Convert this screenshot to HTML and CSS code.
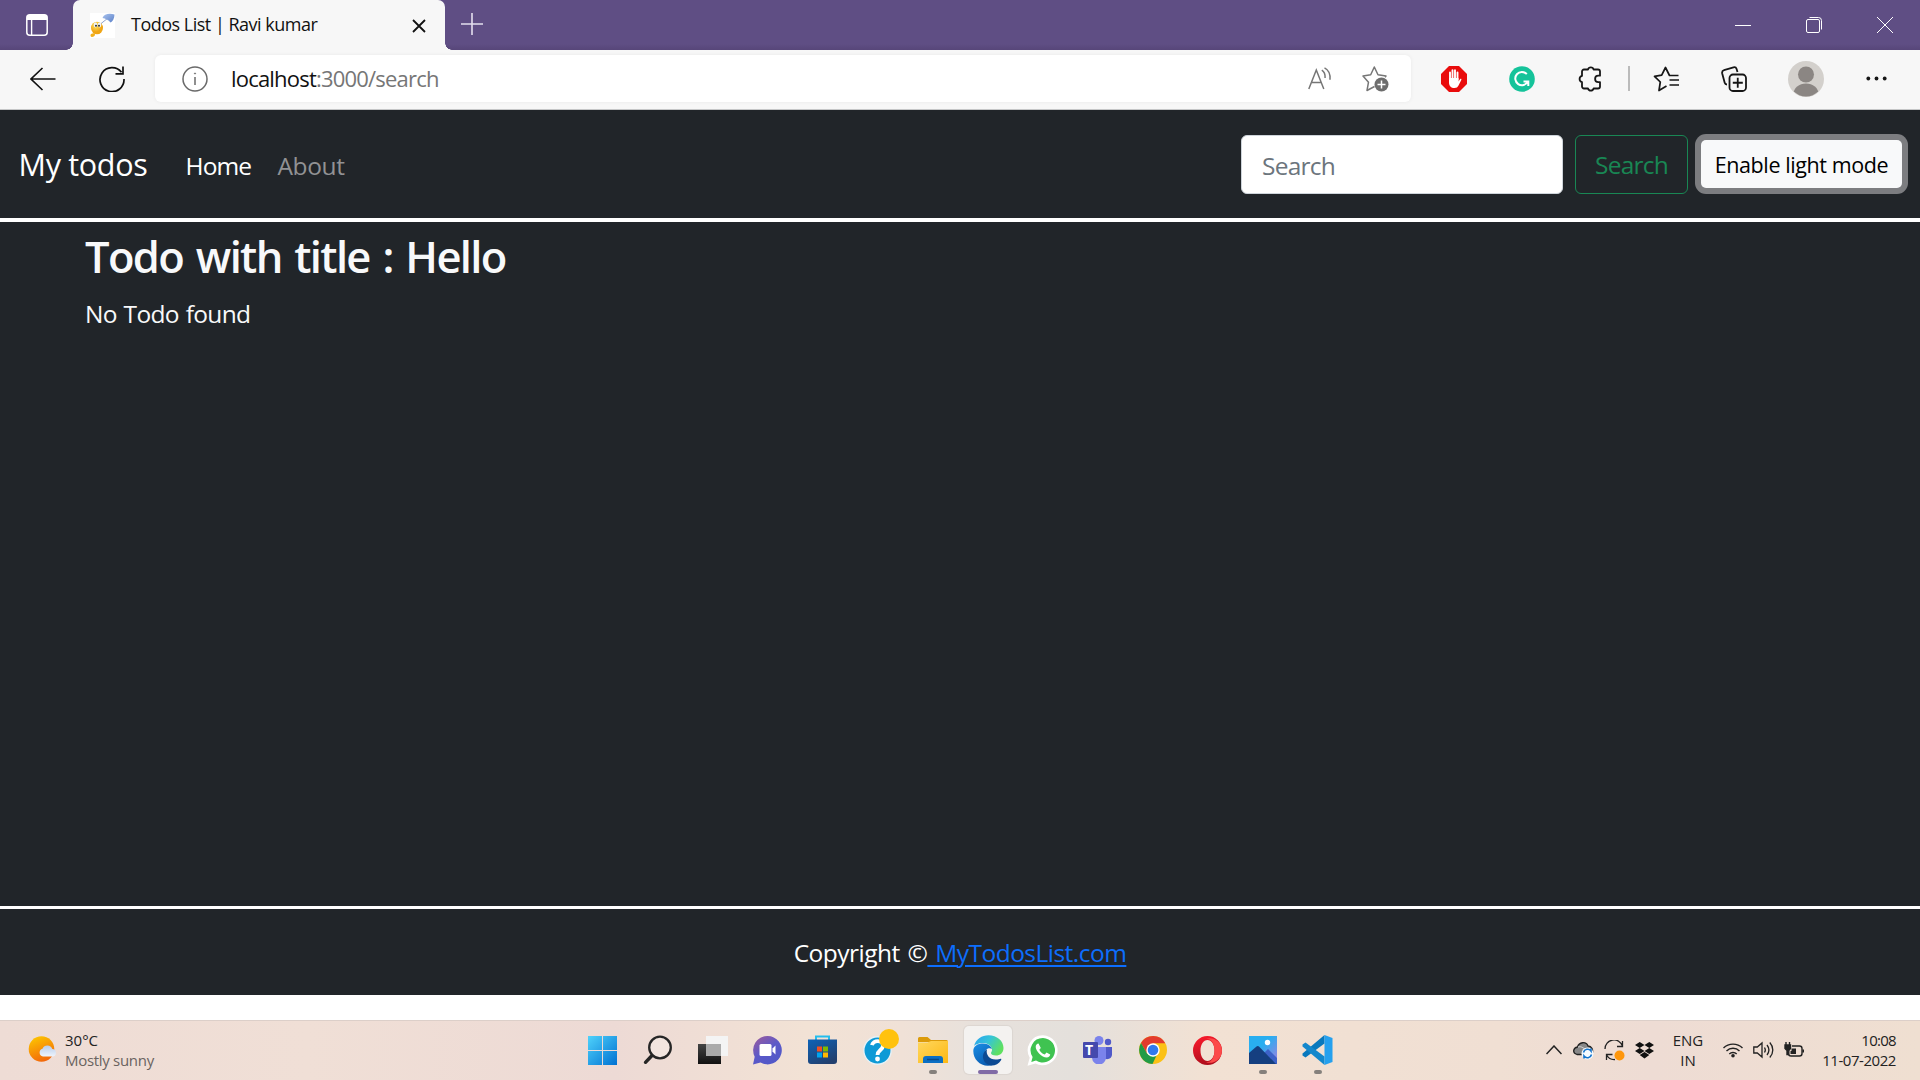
FILE: index.html
```html
<!DOCTYPE html>
<html lang="en">
<head>
<meta charset="utf-8">
<title>Todos List | Ravi kumar</title>
<link rel="stylesheet" href="styles.css">
</head>
<body>
<header class="tabstrip">
  <div class="tab-actions">
    <svg width="22" height="22" viewBox="0 0 22 22" fill="none" stroke="#fff"><rect x=".8" y=".8" width="20.4" height="20.4" rx="3" stroke-width="1.5"/><path d="M1 3.5h20" stroke-width="5"/><path d="M5.6 6v15" stroke-width="1.4"/></svg>
  </div>
  <div class="tab">
    <svg class="favicon" width="25" height="25" viewBox="0 0 25 25"><defs><radialGradient id="fv" cx=".4" cy=".3"><stop offset="0" stop-color="#ffe86a"/><stop offset="1" stop-color="#f0a616"/></radialGradient><linearGradient id="um" x1="0" x2="1" y2="1"><stop stop-color="#a9c3ee"/><stop offset="1" stop-color="#5b80c8"/></linearGradient></defs><path fill="#fff" d="M0 0h25v25H0z"/><path d="M8 13 18 5" stroke="#8ea3cf"/><path d="M12.500 5C14 1 19 0 24.500 1.500c0 4-2 7-4 8-2-2.500-5-4-8-4.500z" fill="url(#um)"/><ellipse cx="7" cy="15" rx="6" ry="6.300" fill="url(#fv)"/><path d="M1 21c2-1 4-1 4 .5S3.500 24 2 24 0 22 1 21z" fill="#f2b01c"/><ellipse cx="5.500" cy="12" rx="1.800" ry="2.400" fill="#eef3f8"/><ellipse cx="9.500" cy="12" rx="1.800" ry="2.400" fill="#eef3f8"/><circle cx="6" cy="12.800" r="1" fill="#333"/><circle cx="9" cy="12.800" r="1" fill="#333"/></svg>
    <span class="tab-title">Todos List | Ravi kumar</span>
    <svg class="tab-close" width="14" height="14" viewBox="0 0 14 14" stroke="#111" stroke-width="1.800"><path d="m1 1 12 12M13 1 1 13"/></svg>
  </div>
  <svg class="new-tab" width="22" height="22" viewBox="0 0 22 22" stroke="#e4dfee" stroke-width="1.600"><path d="M11 0v22M0 11h22"/></svg>
  <div class="window-controls">
    <svg width="16" height="16" viewBox="0 0 16 16" stroke="#fff"><path d="M0 8.500h16"/></svg>
    <svg width="16" height="16" viewBox="0 0 16 16" fill="none" stroke="#fff"><rect x=".5" y="2.500" width="13" height="13" rx="1.500"/><path d="M3.500.5h9a3 3 0 0 1 3 3v9"/></svg>
    <svg width="16" height="16" viewBox="0 0 16 16" stroke="#fff"><path d="m0 0 16 16M16 0 0 16"/></svg>
  </div>
</header>

<div class="toolbar">
  <svg class="back" width="26" height="24" viewBox="0 0 26 24" fill="none" stroke="#111" stroke-width="1.600"><path d="M25.500 12H1M12.500 1 1 12l11.500 11"/></svg>
  <svg class="reload" width="26" height="26" viewBox="0 0 26 26" fill="none" stroke="#111" stroke-width="1.700"><path d="M25 13A12 12 0 1 1 22.500 6.300M24 .5v7.300h-7.500"/></svg>
  <div class="address">
    <svg width="26" height="26" viewBox="0 0 26 26" fill="none" stroke="#6a6a6a" stroke-width="1.500"><circle cx="13" cy="13" r="12"/><path d="M13 11v8" /><circle cx="13" cy="7.500" r=".6" fill="#6a6a6a" stroke-width=".8"/></svg>
    <span class="url">localhost<i>:3000/search</i></span>
    <svg class="read" width="24" height="23" viewBox="0 0 24 23" fill="none" stroke="#767676" stroke-width="1.500"><path d="M.8 22 8.300 3l7.500 19M3.400 15.500h9.800M13.800 3.200c2.200 1.300 3.500 4 3.300 7.800M16.500.8c4 2 6 6.600 5.500 12"/></svg>
    <svg class="fav" width="27" height="27" viewBox="0 0 27 27" fill="none" stroke="#767676" stroke-width="1.500" stroke-linejoin="round"><path d="M12.500 21.500 5 25.500l1.500-8.300L1 11l7.700-1.200L12.300 2l3.700 7.800 8 1.200-1 1.200"/><circle cx="19.500" cy="19.500" r="7" fill="#6d6d6d" stroke="none"/><path d="M19.500 15.500v8M15.500 19.500h8" stroke="#fff"/></svg>
  </div>
  <div class="ext">
    <span class="cell"><svg width="26" height="26" viewBox="0 0 26 26"><path d="M8 0h10l8 8v10l-8 8H8l-8-8V8z" fill="#e90c0c"/><g stroke="#fff" stroke-width="1.900" stroke-linecap="round"><path d="M9 14V6.500M11.500 12V4.200M14 12V4.200M16.500 14V6.500"/></g><path d="M8 12h9.500v3.500l1.500-2.300c.9-.9 1.700-.3 1.300.8l-2.800 5.500c-.8 1.700-2 2.500-4 2.500-3.500 0-5.500-2-5.500-5.500z" fill="#fff"/></svg></span>
    <span class="cell"><svg width="26" height="26" viewBox="0 0 26 26" fill="none" stroke="#fff" stroke-width="2"><circle cx="13" cy="13" r="12.800" fill="#15c39a" stroke="none"/><path d="M17.800 8.200A6.600 6.600 0 1 0 18.800 15.500M14.500 15.500h4.800v4.500"/></svg></span>
    <span class="cell"><svg width="25" height="26" viewBox="0 0 25 26" fill="none" stroke="#161616" stroke-width="1.800" stroke-linejoin="round"><path d="M6 3.500h4a2.900 2.900 0 0 1 5.600 0H20a2 2 0 0 1 2 2v4.200h-1.700a3.200 3.200 0 0 0 0 6.400H22V20.500a2 2 0 0 1-2 2h-4.400a2.900 2.900 0 0 1-5.600 0H6a2 2 0 0 1-2-2v-4.400a3.200 3.200 0 0 1 0-6.200V5.500a2 2 0 0 1 2-2z"/></svg></span>
    <span class="divider"></span>
    <span class="cell wide"><svg width="27" height="26" viewBox="0 0 27 26" fill="none" stroke="#161616" stroke-width="1.700" stroke-linejoin="round"><path d="m13.500 20-7.500 4.500 1.300-8.500L1.500 10.300l7.200-1.100L12.500 1.500l4 8h9M16.500 14h9.500M16.500 19h9.500"/></svg></span>
    <span class="cell wide collections"><svg width="26" height="26" viewBox="0 0 26 26" fill="none" stroke="#161616" stroke-width="1.800" stroke-linejoin="round"><path d="M6 18.500c-1.500 0-2-.6-2.300-1.700L1.200 7.500C.8 5.600 1.500 4.600 3 4.200L12.500 1.300c1.700-.5 2.500 0 3 1.500l1 3.200"/><rect x="8.500" y="8.500" width="16.500" height="16.500" rx="3.500"/><path d="M16.750 11.800v10M11.800 16.750h10"/></svg></span>
    <span class="cell wide"><svg width="36" height="36" viewBox="0 0 36 36"><defs><clipPath id="av"><circle cx="18" cy="18" r="17.500"/></clipPath></defs><circle cx="18" cy="18" r="18" fill="#d3d0cc"/><g clip-path="url(#av)" fill="#8b8683"><circle cx="18" cy="13.500" r="8"/><ellipse cx="18" cy="33" rx="12.500" ry="10.500"/></g></svg></span>
    <span class="cell wide"><svg width="21" height="5" viewBox="0 0 21 5" fill="#161616"><circle cx="2.300" cy="2.500" r="1.900"/><circle cx="10.500" cy="2.500" r="1.900"/><circle cx="18.700" cy="2.500" r="1.900"/></svg></span>
  </div>
</div>

<nav class="navbar">
  <a class="brand">My todos</a>
  <a class="nav-link home">Home</a>
  <a class="nav-link about">About</a>
  <div class="search-field">Search</div>
  <button class="search-btn">Search</button>
  <button class="mode-btn">Enable light mode</button>
</nav>

<main class="content">
  <h2>Todo with title : Hello</h2>
  <p>No Todo found</p>
</main>

<footer class="footer"><p>Copyright ©<a> MyTodosList.com</a></p></footer>

<div class="taskbar">
  <div class="weather">
    <svg width="29" height="28" viewBox="0 0 29 28"><defs><linearGradient id="sun" x1=".2" x2=".6" y2="1"><stop stop-color="#fdc600"/><stop offset="1" stop-color="#f2660b"/></linearGradient><linearGradient id="cl" x2="0" y2="1"><stop stop-color="#b8cdea"/><stop offset="1" stop-color="#eef4fc"/></linearGradient></defs><circle cx="13.500" cy="13" r="12.800" fill="url(#sun)"/><path d="M15 20.500a4 4 0 0 1-.5-7.800 5.300 5.300 0 0 1 9.800.3 3.800 3.800 0 0 1 .7 7.500z" fill="url(#cl)"/></svg>
    <div class="weather-text"><span class="temp">30°C</span><span class="cond">Mostly sunny</span></div>
  </div>
  <div class="apps">
    <span class="app"><svg width="29" height="29" viewBox="0 0 29 29"><defs><linearGradient id="w" gradientUnits="userSpaceOnUse" x2="29" y2="29"><stop stop-color="#4fd2fb"/><stop offset="1" stop-color="#0071d2"/></linearGradient></defs><path fill="url(#w)" d="M0 0h14v14H0zM15 0h14v14H15zM0 15h14v14H0zM15 15h14v14H15z"/></svg></span>
    <span class="app"><svg width="29" height="30" viewBox="0 0 29 30" fill="none" stroke="#262626"><circle cx="17" cy="12.500" r="10.800" fill="#ffffff40" stroke-width="2.300"/><path d="m9 20.500-6.500 6.800" stroke-width="3.400" stroke-linecap="round"/></svg></span>
    <span class="app"><svg width="30" height="28" viewBox="0 0 30 28"><defs><linearGradient id="tv" x2="0" y2="1"><stop stop-color="#444"/><stop offset="1" stop-color="#111"/></linearGradient></defs><path fill="url(#tv)" d="M0 8h23v20H0z"/><path fill="#f4f4f4" d="M8 0h22v20H23V8H8z"/><path fill="#aaa" d="M8 8h15v12H8z"/></svg></span>
    <span class="app"><svg width="29" height="29" viewBox="0 0 29 29"><defs><linearGradient id="ch" x1=".1" x2=".8" y2="1"><stop stop-color="#9b5b9e"/><stop offset=".5" stop-color="#5c59c8"/><stop offset="1" stop-color="#4f58c8"/></linearGradient></defs><path d="M14.500 0a14.200 14.200 0 1 1-7 26.500L0 28.500l1.700-7.700A14.300 14.300 0 0 1 14.500 0z" fill="url(#ch)"/><rect x="6.500" y="8" width="12" height="12" rx="1.500" fill="#fff"/><path d="m19.500 12.500 3-3v9l-3-3z" fill="#fff"/></svg></span>
    <span class="app"><svg width="29" height="30" viewBox="0 0 29 30"><defs><linearGradient id="st" x2=".6" y2="1"><stop stop-color="#0d63b8"/><stop offset="1" stop-color="#22406f"/></linearGradient></defs><path d="M8 6V1.500h13V6" fill="none" stroke="#24bdee" stroke-width="2"/><path d="M0 4.500h29V26a3 3 0 0 1-3 3H3a3 3 0 0 1-3-3z" fill="url(#st)"/><path fill="#f25022" d="M9 11.500h5v5H9z"/><path fill="#7fba00" d="M15 11.500h5v5h-5z"/><path fill="#00a4ef" d="M9 17.500h5v5H9z"/><path fill="#ffb900" d="M15 17.500h5v5h-5z"/></svg></span>
    <span class="app help"><svg width="29" height="29" viewBox="0 0 29 29"><circle cx="14.500" cy="14.500" r="13.700" fill="#0e9ad6" stroke="#e8f1f5" stroke-width="1.400"/><path d="M9 9.200c1-5.500 11-5.500 11 .3 0 4.500-5.500 4.500-5.500 9.500" fill="none" stroke="#fff" stroke-width="3.800"/><circle cx="14.500" cy="23" r="2.400" fill="#fff"/></svg><i class="badge"></i></span>
    <span class="app running"><svg width="30" height="27" viewBox="0 0 30 27"><defs><linearGradient id="fo" x2="1" y2="1"><stop stop-color="#ffd75e"/><stop offset="1" stop-color="#fdb813"/></linearGradient></defs><path fill="#dc9b0a" d="M0 1.500Q0 0 1.500 0h8L13 3h15.500Q30 3 30 5H0z"/><path fill="url(#fo)" d="M0 5.500h9.500L13 4h17v22H0z"/><path d="M5 26v-4q0-3 3-3h14q3 0 3 3v4z" fill="#0b6fc4"/><path d="M9 22.500h12" stroke="#084a88" stroke-width="1.500"/></svg></span>
    <span class="app active"><svg width="31" height="31" viewBox="0 0 31 31"><defs><linearGradient id="e1" x2="1" y2=".5"><stop stop-color="#2a9ff0"/><stop offset=".5" stop-color="#35c4d8"/><stop offset="1" stop-color="#5fe060"/></linearGradient><linearGradient id="e2" x2=".6" y2="1"><stop stop-color="#1a8fe6"/><stop offset="1" stop-color="#0a5bb0"/></linearGradient></defs><path d="M1 11C3 4 9 .3 15.500.3 24 .3 30.500 6 30.500 13c0 5-3.500 7.500-7.500 7.500-3.500 0-5-1.300-5-2.500 0-.8 1-1.200 1-3C19 11 15 8 10 8 5 8 2 10 1 11z" fill="url(#e1)"/><path d="M.3 16C.3 11 4.500 8.500 10 8.500c5 0 8.500 3 8.800 5.500-2-2-7-.5-7 5C11.800 25 17 29 22 29c-2 1-4 1.700-7 1.700C6.500 30.700.3 24 .3 16z" fill="url(#e2)"/><path d="M14 14.500c-1.500 5 2.500 10 8.500 10 3 0 4.500-1 5.500-.8.6.3.3 1 0 1.500-2 3.500-6 5.500-10 5.300C12 29.500 9.500 24.500 10 20.500c.2-2.500 2-5 4-6z" fill="#0c4a93"/></svg></span>
    <span class="app"><svg width="31" height="31" viewBox="0 0 31 31"><path d="M16 .3A15 15 0 1 1 8.500 28.500L.5 30.700l2.200-8A15 15 0 0 1 16 .3z" fill="#fff"/><path d="M16 3A12.300 12.300 0 1 1 9 25.600l-4.700 1.300L5.600 22A12.300 12.300 0 0 1 16 3z" fill="#3fc351"/><path d="M11.500 8.500c-1.500 0-2.800 1.500-2.800 3.500 0 4 6 10.500 11 10.500 2 0 3.500-1.500 3.500-3l-3.700-2-1.700 2c-3-1-4.500-2.700-5.500-4.800l1.500-1.700z" fill="#fff"/></svg></span>
    <span class="app"><svg width="30" height="28" viewBox="0 0 30 28"><circle cx="16" cy="4.500" r="4.500" fill="#7b83eb"/><circle cx="25" cy="6" r="3.200" fill="#5059c9"/><path d="M20 11h9v8a5 5 0 0 1-9 2z" fill="#5059c9"/><path d="M9 11h14v10a7 7 0 0 1-14 1z" fill="#7b83eb"/><rect y="6" width="15" height="16" rx="1" fill="#4549ad"/></svg><b class="teams-t">T</b></span>
    <span class="app"><svg width="28" height="28" viewBox="0 0 28 28"><circle cx="14" cy="14" r="14" fill="#fbc116"/><path d="M2 7a14 14 0 0 1 24.300 0.300H14L8 17.500z" fill="#e33b2e"/><path d="M2 7 8 17.500 14 20.500 17.500 19.500 13.500 28A14 14 0 0 1 2 7z" fill="#219b46"/><circle cx="14" cy="14" r="6.700" fill="#fff"/><circle cx="14" cy="14" r="5.300" fill="#3079ee"/></svg></span>
    <span class="app"><svg width="29" height="29" viewBox="0 0 29 29"><defs><linearGradient id="op" x2=".3" y2="1"><stop stop-color="#ff1b2d"/><stop offset="1" stop-color="#b00e1c"/></linearGradient></defs><path fill="url(#op)" fill-rule="evenodd" d="M14.500 0a14.500 14.500 0 1 1 0 29 14.500 14.500 0 0 1 0-29zm0 4C10.500 4 7.500 8.500 7.500 14.500s3 10.500 7 10.500 7-4.500 7-10.500S18.500 4 14.500 4z"/><path d="M13 3c6-3 16 2 16 11.500S19 29 13 26c5.500 1 8.500-5 8.500-11.500S18.500 2 13 3z" fill="#fc4a4a"/></svg></span>
    <span class="app running"><svg width="28" height="28" viewBox="0 0 28 28"><defs><linearGradient id="ph" x2="1" y2="1"><stop offset=".4" stop-color="#29aef0"/><stop offset="1" stop-color="#a47ee0"/></linearGradient></defs><path fill="url(#ph)" d="M0 0h28v28H0z"/><path fill="#3d62c8" d="m14 18 5-5 9 9v6H14z"/><path fill="#153f80" d="M0 17 7.500 10.500Q9 9.500 10.500 11L27 28H0z"/><circle cx="18.500" cy="6.500" r="2.700" fill="#fff"/></svg></span>
    <span class="app running"><svg width="31" height="30" viewBox="0 0 31 30"><path d="M.5 18.500 22.500 0v8.500L3.500 22.500l-3-2z" fill="#0878bd"/><path d="M.5 11.500v-2l3-2 19 14V30z" fill="#1387cc"/><path fill="#25a0ee" d="m22.500 0 8 3v24l-8 3z"/></svg></span>
  </div>
  <div class="tray">
    <svg width="16" height="10" viewBox="0 0 16 10" fill="none" stroke="#222" stroke-width="1.500"><path d="m.5 9 7.500-8 7.500 8"/></svg>
    <svg class="cloud" width="21" height="20" viewBox="0 0 21 20"><path d="M4 14.500C-1 13 0 8 4.500 7 6 2 13 1 15 6c4 0 5 4 4.500 6.500L12 14.500z" fill="#888" stroke="#222" stroke-width="1.300"/><path d="M5 7c4-1 5 1 11 5" stroke="#ddd" fill="none"/><circle cx="14.500" cy="13.500" r="6" fill="#f6fbff"/><path d="M10.500 12.500a4.200 4.200 0 0 1 7.500-1.500V8.500M18.500 14.500A4.200 4.200 0 0 1 11 16v2.500" fill="none" stroke="#1474cc" stroke-width="1.600"/></svg>
    <svg width="21" height="21" viewBox="0 0 21 21" fill="none" stroke="#222" stroke-width="1.300"><path d="M1 9A9 9 0 0 1 18.500 6M18.500 1v5.500H13M8.500 14.500H2.500V20M2.500 15A9 9 0 0 0 11 19.500"/><circle cx="15.500" cy="15.500" r="5" fill="#fe960b" stroke="none"/></svg>
    <svg width="19" height="17" viewBox="0 0 19 17"><path d="m4.700 0 4.800 3-4.800 3L0 3zM14.300 0 19 3l-4.700 3-4.800-3zM4.700 6l4.800 3-4.800 3L0 9zM14.300 6 19 9l-4.700 3-4.800-3zM4.700 13l4.800-3 4.800 3-4.800 3.500z" fill="#111"/></svg>
    <div class="lang"><span>ENG</span><span>IN</span></div>
    <svg width="20" height="16" viewBox="0 0 20 16" fill="none" stroke="#222" stroke-width="1.400"><path d="M.5 6a13.500 13.500 0 0 1 19 0M3.500 9a9.200 9.200 0 0 1 13 0M6.300 12a5.200 5.200 0 0 1 7.400 0"/><circle cx="10" cy="13.700" r="1.800" fill="#222" stroke="none"/></svg>
    <svg width="21" height="18" viewBox="0 0 21 18" fill="none" stroke="#222" stroke-width="1.300"><path d="M.8 6h3.500L9 2v14l-4.700-4H.8zM11.500 6.500c1 1.500 1 3.500 0 5M14 4c2.300 3 2.300 7 0 10M16.800 1.500c4 4.500 4 10.500 0 15"/></svg>
    <svg width="20" height="17" viewBox="0 0 20 17" fill="none" stroke="#222" stroke-width="1.400"><path d="M8 4h7.500Q18 4 18 6.500v5Q18 14 15.500 14H7Q5 14 4.500 12.500M19.500 7.500v3"/><path d="M1 3h5.500v3.500l-1.700 2v4H3v-4L1 6.500zM2 0v3M5.500 0v3" fill="#222"/><path d="M7.500 9V6.500H12V12H6.500V9z" fill="#222" stroke="none"/></svg>
    <div class="clock"><span class="time">10:08</span><span class="date">11-07-2022</span></div>
  </div>
</div>
</body>
</html>
```
FILE: styles.css
```css
* { box-sizing: border-box; }
body { margin: 0; width: 1920px; height: 1080px; overflow: hidden; background: #fff; font-family: "Open Sans", "Noto Sans", sans-serif; display: flex; flex-direction: column; }
svg { display: block; flex: none; }
span, a, p, button { white-space: nowrap; }

.tabstrip { height: 50px; flex: none; display: flex; background: linear-gradient(#5f4e84, #5f4e84 44px, #574679 50px); }
.tab-actions { width: 73px; padding: 14px 0 0 26px; }
.tab { position: relative; width: 372px; height: 50px; padding: 0 19px 0 17px; display: flex; align-items: center; background: #f7f7f7; border-radius: 7px 7px 0 0; }
.tab::before, .tab::after { content: ""; position: absolute; bottom: 0; width: 7px; height: 7px; }
.tab::before { left: -7px; background: radial-gradient(circle at 0 0, transparent 6.5px, #f7f7f7 7px); }
.tab::after { right: -7px; background: radial-gradient(circle at 100% 0, transparent 6.5px, #f7f7f7 7px); }
.tab-title { margin-left: 16px; padding-bottom: 2px; font-size: 18px; letter-spacing: -.5px; color: #111; }
.tab-close { margin-left: auto; margin-top: 2px; }
.new-tab { margin: 13px 0 0 16px; }
.window-controls { margin-left: auto; padding: 17px 27px 0 0; display: flex; gap: 55px; }

.toolbar { height: 60px; flex: none; display: flex; align-items: center; padding: 0 9px 2px 30px; background: #f7f7f7; border-bottom: 1px solid #c5c6c7; }
.reload { margin-left: 43px; }
.address { width: 1256px; height: 47px; margin-left: 30px; padding: 0 22px 0 27px; display: flex; align-items: center; background: #fff; border-radius: 6px; box-shadow: 0 0 4px #0000000f; }
.url { margin-left: 23px; padding-bottom: 1px; font-size: 22px; letter-spacing: -.8px; color: #111; }
.url i { font-style: normal; color: #767676; }
.read { margin-left: auto; }
.fav { margin-left: 30px; }
.ext { display: flex; align-items: center; margin-left: 9px; }
.cell { width: 68px; display: flex; justify-content: center; }
.cell.wide { width: 70px; }
.collections { padding-right: 4px; }
.divider { width: 2px; height: 25px; margin: 0 1px 0 4px; background: #bbb; }

.navbar { height: 112px; flex: none; display: flex; align-items: center; padding: 0 12px 0 18.500px; background: #212529; border-bottom: 4px solid #fff; color: #fff; }
.brand { font-size: 30.500px; letter-spacing: -.3px; }
.nav-link { font-size: 24.500px; padding-top: 3px; }
.home { width: 67px; margin-left: 38px; letter-spacing: -.9px; }
.about { margin-left: 25px; color: #919294; letter-spacing: -.4px; }
.search-field, .search-btn { height: 59px; display: flex; align-items: center; padding-top: 2px; font-family: inherit; font-size: 24.500px; letter-spacing: -.75px; border-radius: 6px; }
.search-field { width: 322px; margin-left: auto; padding-left: 20px; background: #fff; border: 1px solid #ced4da; color: #6c757d; }
.search-btn { width: 113px; margin-left: 12px; justify-content: center; background: none; border: 1px solid #198754; color: #198754; }
.mode-btn { width: 201px; height: 48px; margin: 0 6px 0 13px; padding: 0; border: 0; border-radius: 5px; background: #f8f9fa; box-shadow: 0 0 0 6px #7c7d80; font-family: inherit; font-size: 21.500px; letter-spacing: -.4px; color: #000; }

.content { height: 684px; flex: none; padding: 7px 85px 0; background: #212529; color: #f8f9fa; }
.content h2 { margin: 0; height: 56px; line-height: 56px; font-size: 43.500px; font-weight: 600; letter-spacing: -1.65px; word-spacing: 3px; }
.content p { margin: 11px 0 0; line-height: 36px; font-size: 24.500px; letter-spacing: -.65px; word-spacing: 1px; }
.footer { height: 89px; flex: none; display: flex; align-items: center; justify-content: center; background: #212529; border-top: 3px solid #fff; color: #fff; font-size: 24.500px; letter-spacing: -.52px; word-spacing: 2px; }
.footer p { margin: 0; white-space: pre; }
.footer a { color: #0d6efd; text-decoration: underline; text-decoration-thickness: 2px; text-underline-offset: 3px; }

.taskbar { height: 60px; margin-top: 25px; padding-bottom: 1px; flex: none; display: flex; align-items: center; justify-content: space-between; border-top: 1px solid #dccfc9; background: linear-gradient(90deg, #eedcd5 0, #f0dfd6 16%, #eddad5 32%, #f2e2d5 42%, #f0e1d7 47%, #e7e1dc 51%, #e4e0dc 56%, #f2e1d3 63%, #f0dfd3 78%, #eedcd4 86%, #efdfd1 100%); }
.weather { display: flex; align-items: center; width: 575px; padding-left: 28px; gap: 8px; }
.weather-text, .lang, .clock { display: flex; flex-direction: column; line-height: 20px; font-size: 15px; color: #222; }
.clock { padding-bottom: 1px; }
.cond { color: #6a6360; letter-spacing: -.3px; }
.apps { display: flex; }
.app { position: relative; width: 55px; height: 48px; display: flex; align-items: center; justify-content: center; }
.running::after { content: ""; position: absolute; left: 24px; bottom: 0; width: 8px; height: 4px; border-radius: 2px; background: #85807c; }
.active { width: 48px; margin: 0 3px 0 4px; border-radius: 5px; background: #f4f2f0; box-shadow: 0 0 1px 1px #0000000d; }
.active::after { content: ""; position: absolute; left: 14px; bottom: 0; width: 20px; height: 4px; border-radius: 2px; background: #806ba6; }
.badge { position: absolute; left: 29px; top: 3px; width: 20px; height: 20px; border-radius: 50%; background: #ffc20e; }
.teams-t { position: absolute; left: 15px; top: 14px; font-size: 14px; line-height: 20px; color: #fff; }
.tray { width: 575px; padding: 0 24px 0 201px; display: flex; align-items: center; }
.tray svg { margin-right: 10px; }
.tray .cloud { margin-left: 1px; }
.lang { align-items: center; width: 48px; margin-right: 11px; }
.clock { align-items: flex-end; margin-left: auto; }
.time { letter-spacing: -.7px; }
.date { letter-spacing: -.45px; }
```
